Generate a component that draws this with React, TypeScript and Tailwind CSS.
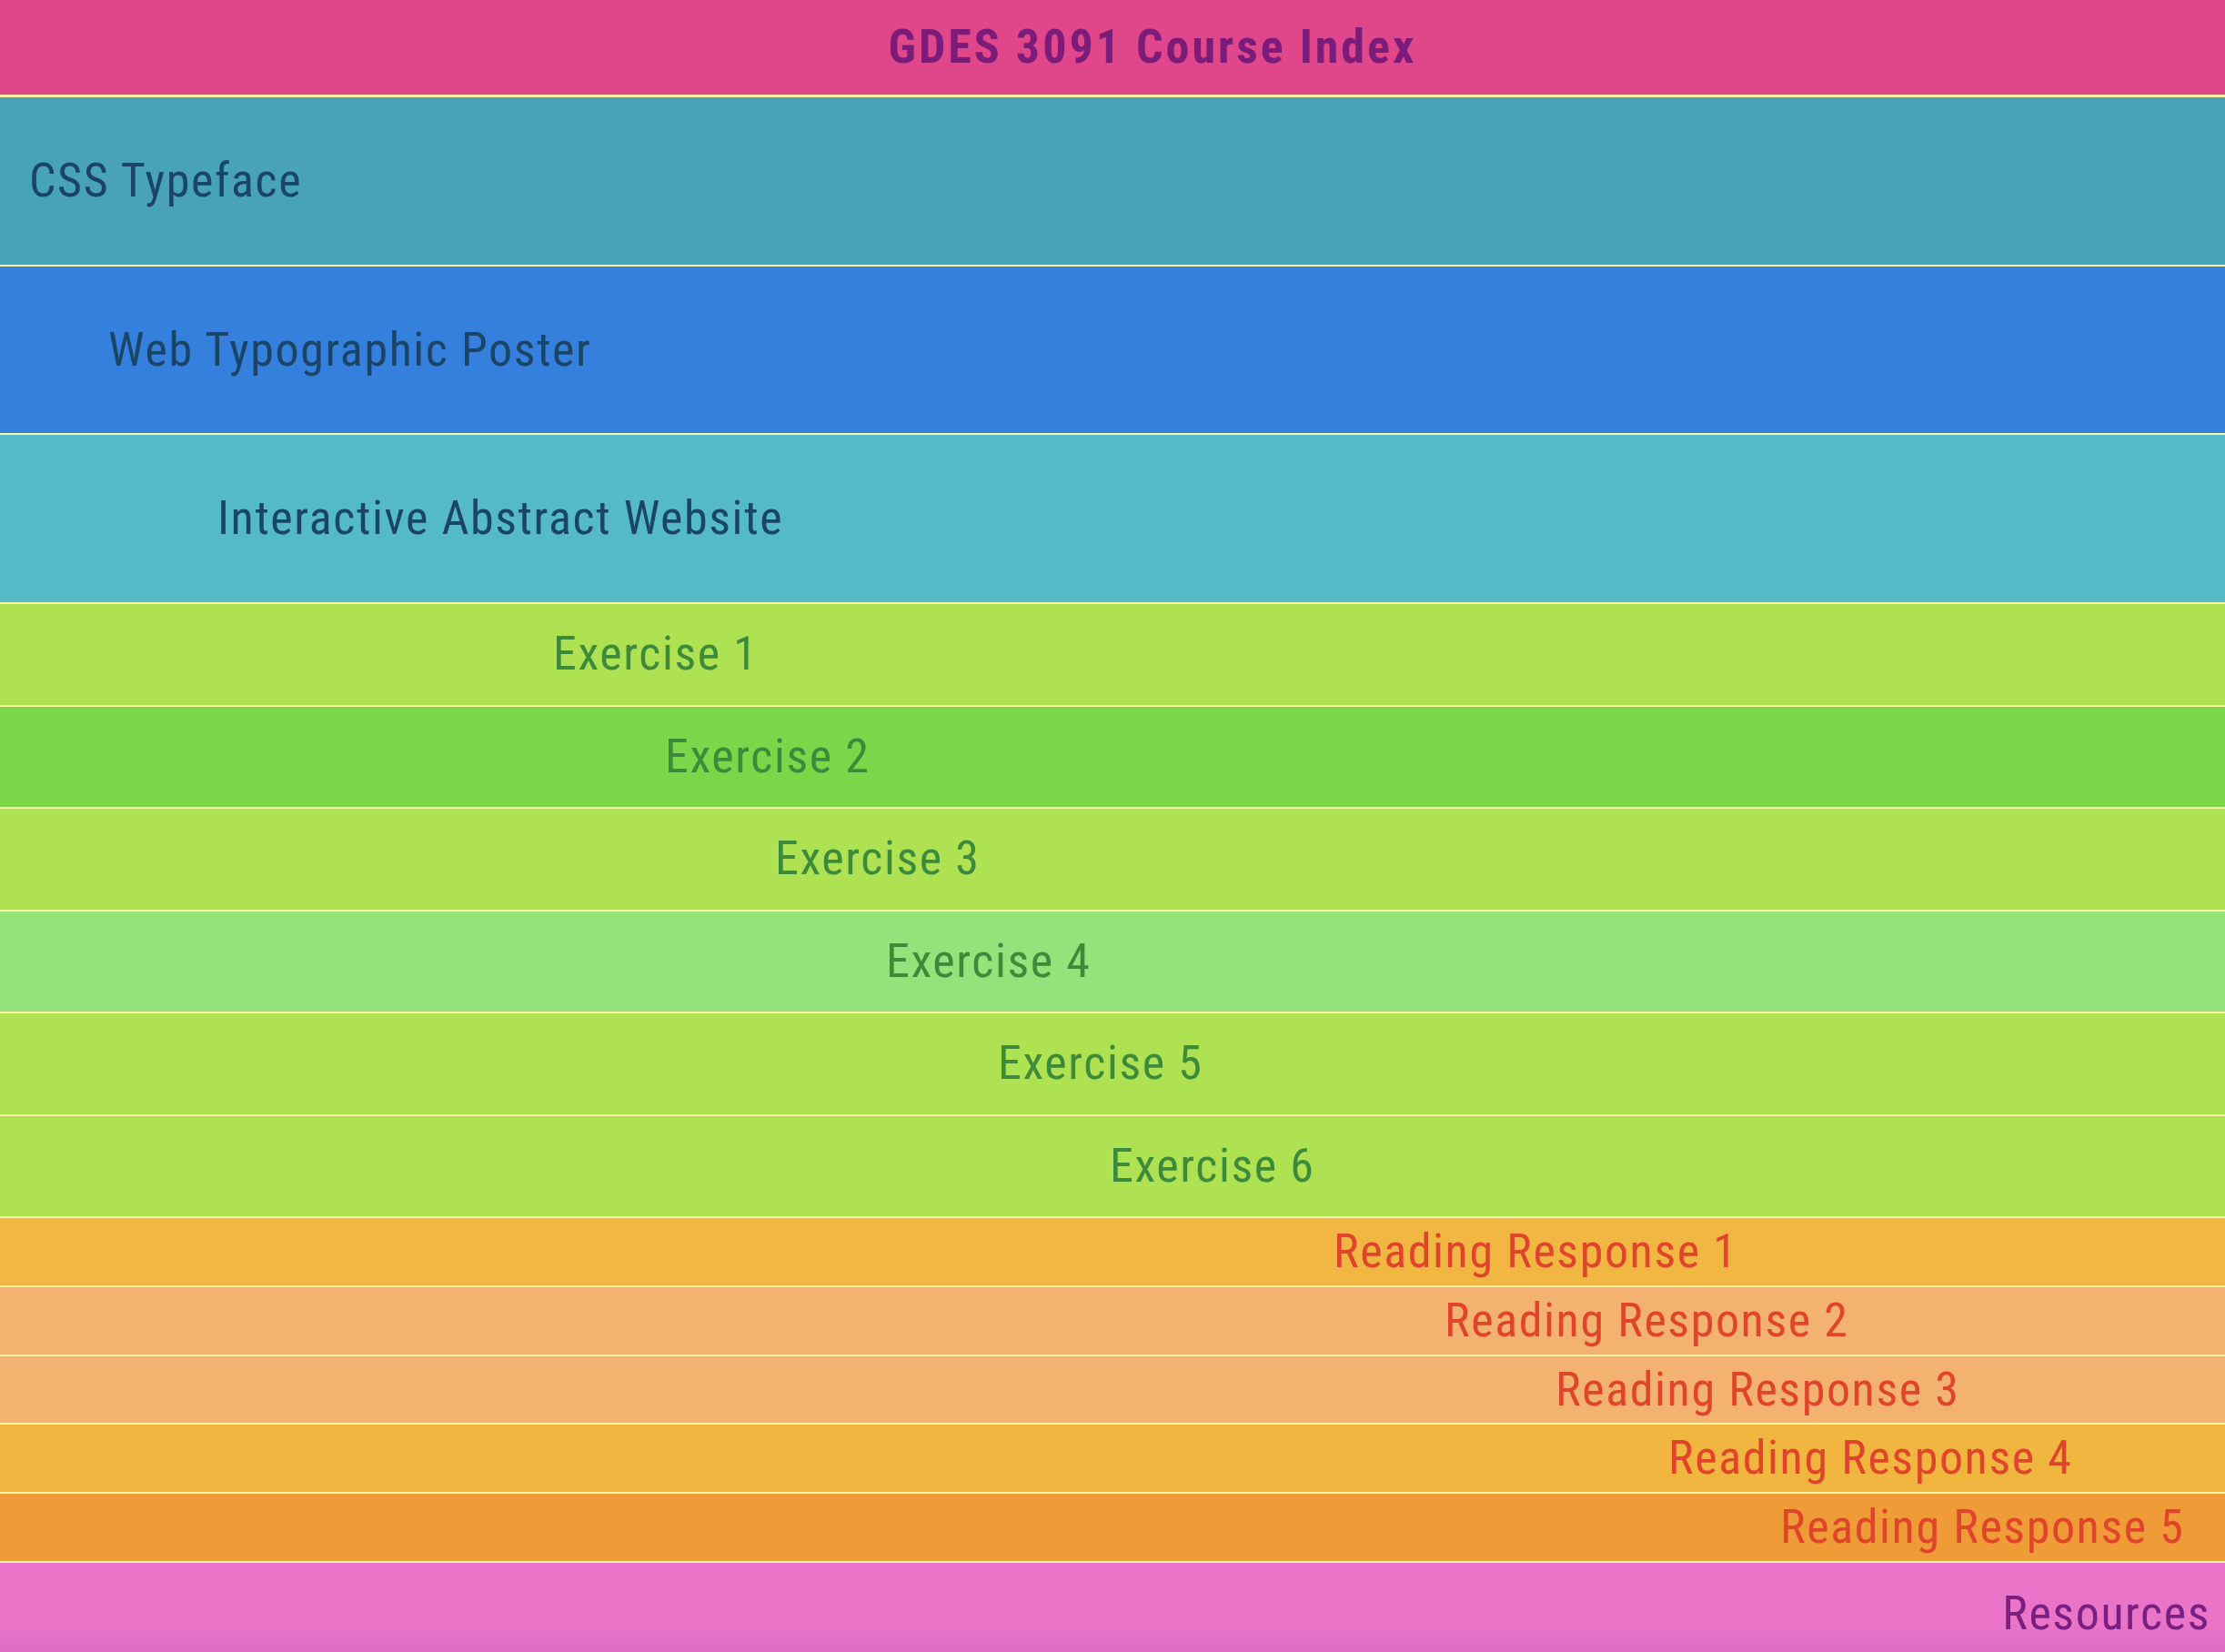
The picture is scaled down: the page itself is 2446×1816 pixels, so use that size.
import React from "react";

type Row = {
  label: string;
  h: string;
  bg: string;
  text: string;
  pad: string;
};

const rows: Row[] = [
  { label: "CSS Typeface", h: "h-[185.7px]", bg: "bg-[#48a3b6]", text: "text-[#1a4566]", pad: "pl-[32px]" },
  { label: "Web Typographic Poster", h: "h-[185.7px]", bg: "bg-[#3680dd]", text: "text-[#1a4566]", pad: "pl-[119px]" },
  { label: "Interactive Abstract Website", h: "h-[185.7px]", bg: "bg-[#54bbc6]", text: "text-[#1a4566]", pad: "pl-[239px]" },
  { label: "Exercise 1", h: "h-[112.5px]", bg: "bg-[#afe252]", text: "text-[#3d8b3a]", pad: "pl-[608px]" },
  { label: "Exercise 2", h: "h-[112.5px]", bg: "bg-[#7cd64a]", text: "text-[#3d8b3a]", pad: "pl-[731px]" },
  { label: "Exercise 3", h: "h-[112.5px]", bg: "bg-[#afe252]", text: "text-[#3d8b3a]", pad: "pl-[852px]" },
  { label: "Exercise 4", h: "h-[112.5px]", bg: "bg-[#93e27a]", text: "text-[#3d8b3a]", pad: "pl-[974px]" },
  { label: "Exercise 5", h: "h-[112.5px]", bg: "bg-[#afe252]", text: "text-[#3d8b3a]", pad: "pl-[1097px]" },
  { label: "Exercise 6", h: "h-[112.5px]", bg: "bg-[#afe252]", text: "text-[#3d8b3a]", pad: "pl-[1220px]" },
  { label: "Reading Response 1", h: "h-[75.8px]", bg: "bg-[#f1b742]", text: "text-[#e0452b]", pad: "pl-[1466px]" },
  { label: "Reading Response 2", h: "h-[75.8px]", bg: "bg-[#f3b26f]", text: "text-[#e0452b]", pad: "pl-[1588px]" },
  { label: "Reading Response 3", h: "h-[75.8px]", bg: "bg-[#f3b26f]", text: "text-[#e0452b]", pad: "pl-[1710px]" },
  { label: "Reading Response 4", h: "h-[75.8px]", bg: "bg-[#f1b640]", text: "text-[#e0452b]", pad: "pl-[1834px]" },
  { label: "Reading Response 5", h: "h-[75.8px]", bg: "bg-[#ee9b38]", text: "text-[#e0452b]", pad: "pl-[1957px]" },
];

export default function App() {
  return (
    <div className="flex h-[1816px] w-full flex-col overflow-hidden font-['Roboto',sans-serif] text-[52px] leading-none tracking-[1.6px] [font-stretch:condensed]">
      <header className="flex h-[107px] shrink-0 items-center justify-center border-b-[3px] border-[#fff4a3] bg-[#e0468a] pl-[88px]">
        <h1 className="font-bold tracking-[3px] text-[#7b1c7a]">GDES 3091 Course Index</h1>
      </header>
      {rows.map((r) => (
        <a
          key={r.label}
          href="#"
          className={`flex shrink-0 items-center border-b-2 border-[#fff4a3] ${r.h} ${r.bg} ${r.text} ${r.pad}`}
        >
          {r.label}
        </a>
      ))}
      <a
        href="#"
        className="flex h-[112px] shrink-0 items-center justify-end bg-linear-to-b from-[#e974c8] from-[60%] to-[#da68bd] pr-[16px] text-[#7a1e82]"
      >
        Resources
      </a>
    </div>
  );
}
